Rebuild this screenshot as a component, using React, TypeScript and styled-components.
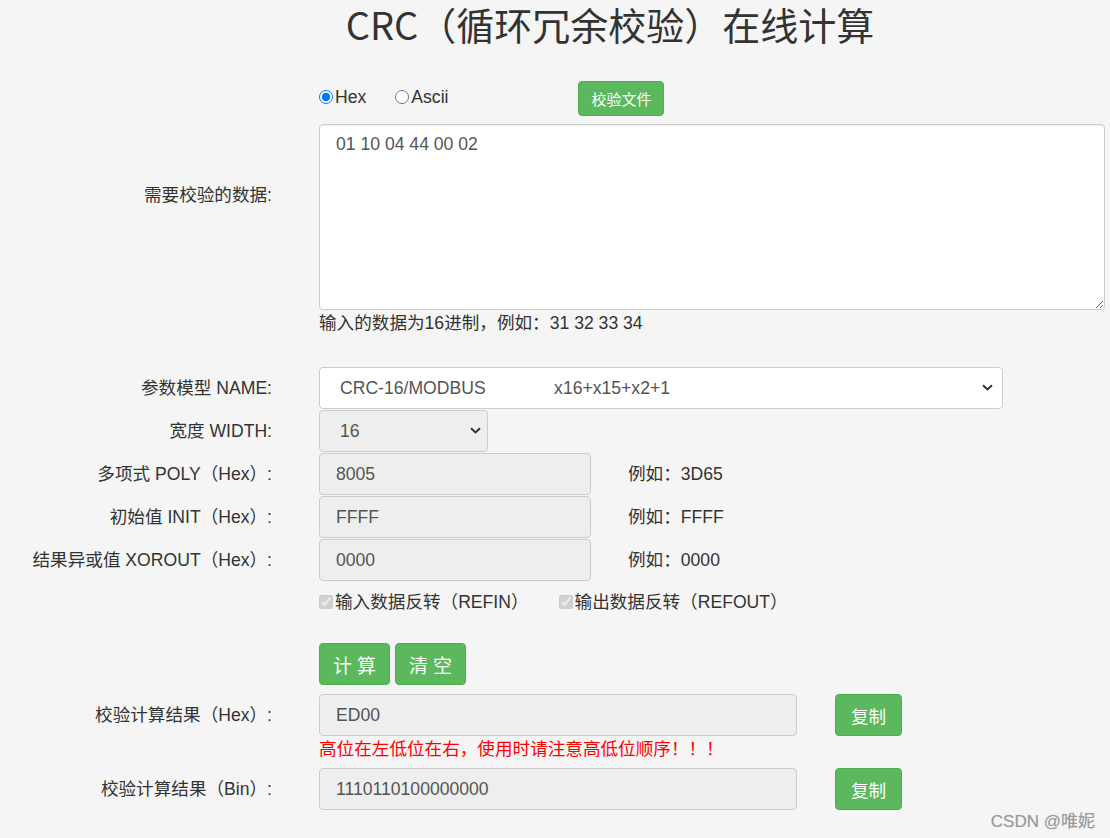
import React, { useState } from 'react'
import styled, { createGlobalStyle } from 'styled-components'

const GlobalStyle = createGlobalStyle`
  html, body {
    margin: 0;
    padding: 0;
    background: #f5f5f5;
  }
  body {
    font-family: "Liberation Sans", "Noto Sans CJK SC", sans-serif;
    font-size: 17.6px;
    color: #333;
  }
  * { box-sizing: border-box; }
`

const Page = styled.main`
  position: relative;
  width: 1110px;
  min-height: 838px;
  overflow: hidden;
`

const Title = styled.h1`
  margin: -4px 0 0;
  padding-left: 110px;
  line-height: 56px;
  text-align: center;
  font-family: "Noto Sans CJK SC", sans-serif;
  font-weight: 400;
  font-size: 38px;
  color: #333;
  white-space: nowrap;
`

const Row = styled.div<{ $top?: number; $align?: string }>`
  display: grid;
  grid-template-columns: 272px 1fr;
  column-gap: 47px;
  align-items: ${({ $align }) => $align || 'center'};
  margin-top: ${({ $top }) => $top ?? 1}px;
`

const Label = styled.label<{ $padTop?: number; $lh?: number }>`
  text-align: right;
  line-height: ${({ $lh }) => $lh ?? 24}px;
  white-space: nowrap;
  padding-top: ${({ $padTop }) => $padTop ?? 0}px;
`

const Cell = styled.div`
  display: flex;
  align-items: center;
`

const Stack = styled.div`
  display: flex;
  flex-direction: column;
`

const RadioLabel = styled.label<{ $gap?: number }>`
  display: inline-flex;
  align-items: center;
  margin-right: ${({ $gap }) => $gap ?? 0}px;
  margin-bottom: 4px;
  line-height: 24px;

  input {
    margin: 0 2px 0 0;
    width: 14px;
    height: 14px;
  }
`

const GreenButton = styled.button<{ $size?: 'sm' | 'lg' }>`
  font-family: "Liberation Sans", "Noto Sans CJK SC", sans-serif;
  background: #5cb85c;
  border: 1px solid #4cae4c;
  border-radius: 4px;
  color: #fff;
  cursor: pointer;
  white-space: nowrap;
  height: ${({ $size }) => ($size === 'sm' ? 35 : 42)}px;
  padding: ${({ $size }) => ($size === 'sm' ? '0 12px' : '0 15px')};
  font-size: ${({ $size }) => ($size === 'sm' ? 15 : 17.6)}px;
`

const ActionButton = styled(GreenButton)`
  font-size: 19px;
  letter-spacing: 5px;
  padding: 0 8px 0 13px;
  margin-right: 5px;
`

const TextArea = styled.textarea`
  width: 786px;
  height: 186px;
  border: 1px solid #ccc;
  border-radius: 4px;
  background: #fff;
  padding: 7px 16px;
  font-family: "Liberation Sans", "Noto Sans CJK SC", sans-serif;
  font-size: 17.6px;
  line-height: 24px;
  color: #555;
  box-shadow: inset 0 1px 1px rgba(0, 0, 0, 0.075);
  outline: none;
`

const Help = styled.div<{ $red?: boolean }>`
  line-height: 24px;
  margin-top: 1px;
  color: ${({ $red }) => ($red ? '#ff0000' : '#333')};
`

const SelectWrap = styled.div<{ $w: number }>`
  position: relative;
  width: ${({ $w }) => $w}px;

  svg {
    position: absolute;
    top: 17px;
    pointer-events: none;
  }
`

const Select = styled.select<{ $gray?: boolean }>`
  appearance: none;
  width: 100%;
  height: 42px;
  border: 1px solid #ccc;
  border-radius: 4px;
  background: ${({ $gray }) => ($gray ? '#eeeeee' : '#fff')};
  padding: 0 30px 0 20px;
  font-family: "Liberation Sans", "Noto Sans CJK SC", sans-serif;
  font-size: 17.6px;
  color: #555;
  outline: none;
`

const Input = styled.input<{ $w: number }>`
  width: ${({ $w }) => $w}px;
  height: 42px;
  border: 1px solid #ccc;
  border-radius: 4px;
  background: #eeeeee;
  padding: 0 16px;
  font-family: "Liberation Sans", "Noto Sans CJK SC", sans-serif;
  font-size: 17.6px;
  color: #555;
  outline: none;
`

const Hint = styled.span`
  margin-left: 37px;
  line-height: 24px;
`

const CheckLabel = styled.label<{ $gap?: number }>`
  display: inline-flex;
  align-items: center;
  margin-right: ${({ $gap }) => $gap ?? 0}px;
  line-height: 24px;

  input {
    margin: 0 2px 0 0;
    width: 14px;
    height: 14px;
  }
`

const CopyButton = styled(GreenButton)`
  margin-left: 38px;
  width: 67px;
  padding: 0;
`

const Watermark = styled.div`
  position: absolute;
  right: 15px;
  top: 807px;
  font-size: 17px;
  color: #999;
  text-shadow: 0 0 1px rgba(0, 0, 0, 0.15);
`

const Chevron = ({ right }: { right: number }) => (
  <svg width="11" height="7" viewBox="0 0 11 7" style={{ right }}>
    <path d="M1 1.2 L5.5 5.4 L10 1.2" fill="none" stroke="#333" strokeWidth="2" />
  </svg>
)

const modelText = 'CRC-16/MODBUS' + '\u00a0'.repeat(14) + 'x16+x15+x2+1'

export default function App() {
  const [mode, setMode] = useState('hex')
  const [data, setData] = useState('01 10 04 44 00 02')

  return (
    <Page>
      <GlobalStyle />
      <Title>CRC（循环冗余校验）在线计算</Title>

      <Row $top={29}>
        <span />
        <Cell>
          <RadioLabel $gap={29}>
            <input type="radio" checked={mode === 'hex'} onChange={() => setMode('hex')} />
            Hex
          </RadioLabel>
          <RadioLabel $gap={130}>
            <input type="radio" checked={mode === 'ascii'} onChange={() => setMode('ascii')} />
            Ascii
          </RadioLabel>
          <GreenButton $size="sm">校验文件</GreenButton>
        </Cell>
      </Row>

      <Row $top={8} $align="start">
        <Label $padTop={59}>需要校验的数据:</Label>
        <Stack>
          <TextArea value={data} onChange={(e) => setData(e.target.value)} />
          <Help>输入的数据为16进制，例如：31 32 33 34</Help>
        </Stack>
      </Row>

      <Row $top={32}>
        <Label>参数模型 NAME:</Label>
        <SelectWrap $w={684}>
          <Select defaultValue="modbus">
            <option value="modbus">{modelText}</option>
          </Select>
          <Chevron right={10} />
        </SelectWrap>
      </Row>

      <Row>
        <Label>宽度 WIDTH:</Label>
        <SelectWrap $w={169}>
          <Select $gray defaultValue="16">
            <option value="16">16</option>
          </Select>
          <Chevron right={7} />
        </SelectWrap>
      </Row>

      <Row>
        <Label>多项式 POLY（Hex）:</Label>
        <Cell>
          <Input $w={272} readOnly value="8005" />
          <Hint>例如：3D65</Hint>
        </Cell>
      </Row>

      <Row>
        <Label>初始值 INIT（Hex）:</Label>
        <Cell>
          <Input $w={272} readOnly value="FFFF" />
          <Hint>例如：FFFF</Hint>
        </Cell>
      </Row>

      <Row>
        <Label>结果异或值 XOROUT（Hex）:</Label>
        <Cell>
          <Input $w={272} readOnly value="0000" />
          <Hint>例如：0000</Hint>
        </Cell>
      </Row>

      <Row $top={9}>
        <span />
        <Cell>
          <CheckLabel $gap={30}>
            <input type="checkbox" checked disabled readOnly />
            输入数据反转（REFIN）
          </CheckLabel>
          <CheckLabel>
            <input type="checkbox" checked disabled readOnly />
            输出数据反转（REFOUT）
          </CheckLabel>
        </Cell>
      </Row>

      <Row $top={29}>
        <span />
        <Cell>
          <ActionButton>计算</ActionButton>
          <ActionButton>清空</ActionButton>
        </Cell>
      </Row>

      <Row $top={9} $align="start">
        <Label $lh={42}>校验计算结果（Hex）:</Label>
        <Stack>
          <Cell>
            <Input $w={478} readOnly value="ED00" />
            <CopyButton>复制</CopyButton>
          </Cell>
          <Help $red>高位在左低位在右，使用时请注意高低位顺序！！！</Help>
        </Stack>
      </Row>

      <Row $top={7}>
        <Label>校验计算结果（Bin）:</Label>
        <Cell>
          <Input $w={478} readOnly value="1110110100000000" />
          <CopyButton>复制</CopyButton>
        </Cell>
      </Row>

      <Watermark>CSDN @唯妮</Watermark>
    </Page>
  )
}
